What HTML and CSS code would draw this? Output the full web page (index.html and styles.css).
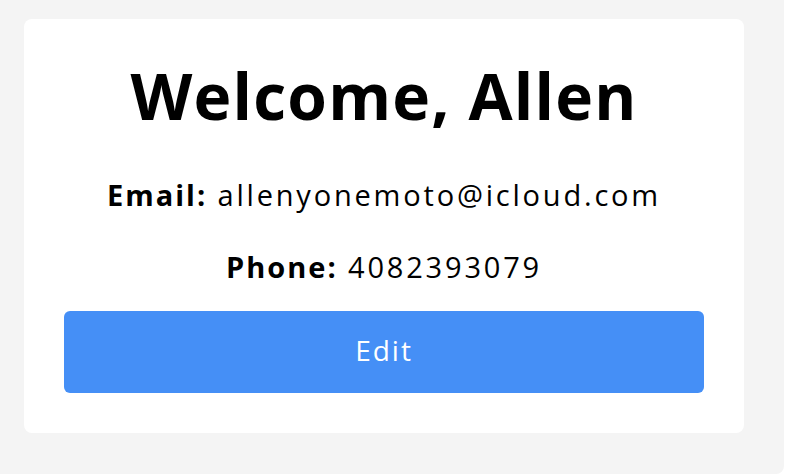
FILE: index.html
```html
<!DOCTYPE html>
<html lang="en">
<head>
<meta charset="utf-8">
<title>Profile</title>
<link rel="stylesheet" href="styles.css">
</head>
<body>
<div class="page">
  <div class="card">
    <h1 class="title">Welcome, Allen</h1>
    <p class="info"><strong>Email:</strong> allenyonemoto@icloud.com</p>
    <p class="info"><strong>Phone:</strong> 4082393079</p>
    <button class="edit-btn" type="button">Edit</button>
  </div>
</div>
</body>
</html>
```
FILE: styles.css
```css
html, body {
  margin: 0;
  padding: 0;
  background: #ffffff;
}
body {
  font-family: "Open Sans", "Noto Sans", sans-serif;
  color: #000;
}
.page {
  width: 784px;
  height: 474px;
  box-sizing: border-box;
  background: #f4f4f4;
  padding: 19px 40px 0 24px;
  border-bottom-right-radius: 8px;
}
.card {
  width: 720px;
  height: 414px;
  box-sizing: border-box;
  background: #ffffff;
  border-radius: 8px;
  padding: 33px 40px 0;
  display: flex;
  flex-direction: column;
  align-items: center;
}
.title {
  margin: 0 0 19px;
  font-size: 64px;
  line-height: 88px;
  font-weight: 700;
  letter-spacing: 1.2px;
}
.info {
  margin: 0;
  font-size: 29px;
  line-height: 72px;
  font-weight: 400;
  letter-spacing: 2.8px;
}
.info strong {
  font-weight: 700;
  letter-spacing: 2px;
}
.edit-btn {
  margin-top: 8px;
  width: 640px;
  height: 82px;
  padding: 0 0 4px;
  border: none;
  border-radius: 6px;
  background: #458ff6;
  color: #ffffff;
  font-family: "Open Sans", "Noto Sans", sans-serif;
  font-size: 28px;
  font-weight: 400;
  letter-spacing: 2px;
}
```
